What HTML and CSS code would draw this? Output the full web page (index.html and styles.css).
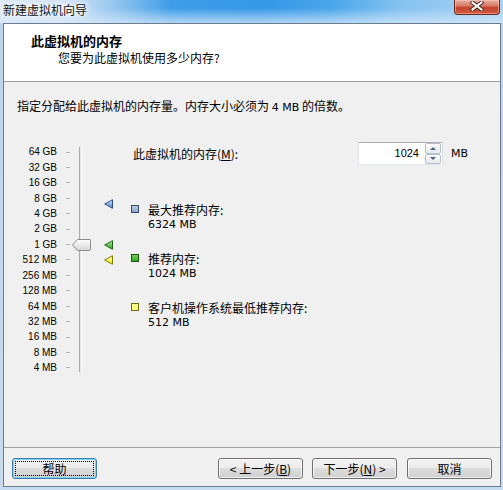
FILE: index.html
```html
<!DOCTYPE html>
<html lang="zh-CN">
<head>
<meta charset="utf-8">
<title>新建虚拟机向导</title>
<link rel="stylesheet" href="styles.css">
</head>
<body>
<div class="window">
  <div class="titlebar">
    <span class="title">新建虚拟机向导</span>
    <div class="close">
      <svg width="14" height="10" viewBox="0 0 14 10">
        <path d="M2.5 1.5 L11.5 8.5 M11.5 1.5 L2.5 8.5" stroke="#3a2420" stroke-width="4" stroke-linecap="square"/>
        <path d="M2.5 1.5 L11.5 8.5 M11.5 1.5 L2.5 8.5" stroke="#ffffff" stroke-width="2.2" stroke-linecap="square"/>
      </svg>
    </div>
  </div>
  <div class="client">
    <div class="header">
      <div class="h-title">此虚拟机的内存</div>
      <div class="h-sub">您要为此虚拟机使用多少内存?</div>
    </div>
    <div class="content">
      <p class="intro">指定分配给此虚拟机的内存量。内存大小必须为 <span class="num">4 MB</span> 的倍数。</p>
      <div class="main">
        <div class="scale">
          <div class="track"></div>
          <span class="lbl">64 GB</span><span class="tick"></span>
          <span class="lbl">32 GB</span><span class="tick"></span>
          <span class="lbl">16 GB</span><span class="tick"></span>
          <span class="lbl">8 GB</span><span class="tick"></span>
          <span class="lbl">4 GB</span><span class="tick"></span>
          <span class="lbl">2 GB</span><span class="tick"></span>
          <span class="lbl">1 GB</span><span class="tick"></span>
          <span class="lbl">512 MB</span><span class="tick"></span>
          <span class="lbl">256 MB</span><span class="tick"></span>
          <span class="lbl">128 MB</span><span class="tick"></span>
          <span class="lbl">64 MB</span><span class="tick"></span>
          <span class="lbl">32 MB</span><span class="tick"></span>
          <span class="lbl">16 MB</span><span class="tick"></span>
          <span class="lbl">8 MB</span><span class="tick"></span>
          <span class="lbl">4 MB</span><span class="tick"></span>
          <svg class="thumb" style="top:97px" width="19" height="12" viewBox="0 0 19 12">
            <defs>
              <linearGradient id="tg" x1="0" y1="0" x2="0" y2="1">
                <stop offset="0" stop-color="#ffffff"/>
                <stop offset="1" stop-color="#d4d4d4"/>
              </linearGradient>
            </defs>
            <path d="M0.5 6 L5.5 0.5 L18 0.5 Q18.5 0.5 18.5 1.5 L18.5 10.5 Q18.5 11.5 17.5 11.5 L5.5 11.5 Z" fill="url(#tg)" stroke="#8b8b8b"/>
          </svg>
          <svg class="marker" style="top:57px" width="9" height="10" viewBox="0 0 9 10">
            <defs>
              <linearGradient id="mb" x1="0" y1="0" x2="0" y2="1">
                <stop offset="0" stop-color="#d6e4f6"/>
                <stop offset="1" stop-color="#4b7cc0"/>
              </linearGradient>
            </defs>
            <path d="M0.7 5 L8.5 0.7 L8.5 9.3 Z" fill="url(#mb)" stroke="#2d4f86" stroke-linejoin="round"/>
          </svg>
          <svg class="marker" style="top:98px" width="9" height="10" viewBox="0 0 9 10">
            <defs>
              <linearGradient id="mg" x1="0" y1="0" x2="0" y2="1">
                <stop offset="0" stop-color="#b9f0a8"/>
                <stop offset="1" stop-color="#27a018"/>
              </linearGradient>
            </defs>
            <path d="M0.7 5 L8.5 0.7 L8.5 9.3 Z" fill="url(#mg)" stroke="#1b6612" stroke-linejoin="round"/>
          </svg>
          <svg class="marker" style="top:113px" width="9" height="10" viewBox="0 0 9 10">
            <defs>
              <linearGradient id="my" x1="0" y1="0" x2="0" y2="1">
                <stop offset="0" stop-color="#ffffc8"/>
                <stop offset="1" stop-color="#f0f000"/>
              </linearGradient>
            </defs>
            <path d="M0.7 5 L8.5 0.7 L8.5 9.3 Z" fill="url(#my)" stroke="#7a7a00" stroke-linejoin="round"/>
          </svg>
        </div>
        <div class="legend">
          <div class="mem-row">
            <span class="mem-label">此虚拟机的内存(<u>M</u>):</span>
            <div class="spin">
              <span class="spin-val">1024</span>
              <div class="spin-btns">
                <span class="sb"><span class="arr up"></span></span>
                <span class="sb"><span class="arr down"></span></span>
              </div>
            </div>
            <span class="num mb">MB</span>
          </div>
          <div class="item first">
            <span class="sw blue"></span>
            <div class="item-text">
              <div>最大推荐内存:</div>
              <div class="num">6324 MB</div>
            </div>
          </div>
          <div class="item">
            <span class="sw green"></span>
            <div class="item-text">
              <div>推荐内存:</div>
              <div class="num">1024 MB</div>
            </div>
          </div>
          <div class="item">
            <span class="sw yellow"></span>
            <div class="item-text">
              <div>客户机操作系统最低推荐内存:</div>
              <div class="num">512 MB</div>
            </div>
          </div>
        </div>
      </div>
    </div>
    <div class="footer">
      <button class="btn help">帮助</button>
      <button class="btn back">&lt; 上一步(<u>B</u>)</button>
      <button class="btn next">下一步(<u>N</u>) &gt;</button>
      <button class="btn cancel">取消</button>
    </div>
  </div>
</div>
</body>
</html>
```
FILE: styles.css
```css
* { box-sizing: border-box; }

body {
  margin: 0;
  background: #c6d8ec;
}

.window {
  width: 503px;
  height: 490px;
  display: flex;
  flex-direction: column;
  background: linear-gradient(to bottom, #bcd3ea, #c9dbee);
  font-family: "Noto Sans CJK SC", sans-serif;
  font-size: 12px;
  color: #000;
}

.titlebar {
  height: 23px;
  flex: none;
  display: flex;
  align-items: flex-start;
  background:
    linear-gradient(to bottom, rgba(255,255,255,0) 0%, rgba(255,255,255,0) 35%, rgba(214,232,249,0.75) 100%),
    linear-gradient(to right, #dbe8f6 0%, #cfe2f5 14%, #8cc2ee 24%, #3f9de8 34%, #3597e6 52%, #4aa6ea 66%, #86c3f0 80%, #a9d2f3 100%);
}

.title {
  padding-left: 3px;
  line-height: 20px;
  font-size: 12px;
  color: #111;
  text-shadow: 0 0 4px #fff, 0 0 6px #fff, 0 0 8px rgba(255,255,255,0.9);
}

.close {
  margin-left: auto;
  margin-right: 3px;
  width: 46px;
  height: 15px;
  border: 1px solid #6a2a20;
  border-top: none;
  border-radius: 0 0 4px 4px;
  background: linear-gradient(to bottom, #eab1a4 0%, #d87a66 40%, #c4432d 55%, #cf5a3f 100%);
  box-shadow: inset 0 0 0 1px rgba(255,200,190,0.5);
  display: flex;
  justify-content: center;
  align-items: flex-start;
  padding-top: 1px;
}

.client {
  flex: 1;
  margin: 0 2px 3px 3px;
  border: 1px solid #6b7c8e;
  background: #f0f0f0;
  display: flex;
  flex-direction: column;
}

.header {
  flex: none;
  height: 58px;
  background: #fff;
  border-bottom: 1px solid #a0a0a0;
  padding: 9px 0 0 27px;
}

.h-title {
  font-size: 13px;
  font-weight: bold;
  line-height: 16px;
}

.h-sub {
  margin-top: 1px;
  padding-left: 27px;
  line-height: 16px;
}

.content {
  flex: 1;
  padding: 16px 0 0 13px;
}

.intro {
  margin: 0;
  line-height: 16px;
  white-space: nowrap;
}

.num {
  font-family: "DejaVu Sans", sans-serif;
  font-size: 11px;
}

.main {
  display: flex;
  margin-top: 26px;
}

.scale {
  position: relative;
  flex: none;
  width: 114px;
  display: grid;
  grid-template-columns: 40px 9px 4px 9px 3px;
  grid-template-rows: repeat(15, 15.43px);
  align-content: start;
  padding-top: 2.3px;
}

.lbl {
  grid-column: 1;
  text-align: right;
  font-family: "Liberation Sans", sans-serif;
  font-size: 10px;
  line-height: 15.43px;
  white-space: nowrap;
}

.tick {
  grid-column: 3;
  align-self: center;
  height: 1px;
  background: #b4b4b4;
}

.track {
  grid-column: 5;
  grid-row: 1 / -1;
  margin: 2.7px 0 3.7px;
  border-left: 1px solid #a9a9a9;
  border-right: 1px solid #ffffff;
  background: #e2e2e2;
}

.thumb {
  position: absolute;
  left: 55px;
}

.marker {
  position: absolute;
  left: 87px;
}

.legend {
  flex: 1;
  display: flex;
  flex-direction: column;
}

.mem-row {
  display: flex;
  align-items: center;
  height: 23px;
  padding-left: 2px;
}

.mem-label {
  width: 225px;
  flex: none;
  line-height: 16px;
}

.spin {
  display: flex;
  width: 85px;
  height: 23px;
  border: 1px solid;
  border-color: #abadb3 #dbdfe6 #e3e9ef #e2e3ea;
  background: #fff;
}

.spin-val {
  flex: 1;
  text-align: right;
  padding-right: 6px;
  font-family: "Liberation Sans", sans-serif;
  font-size: 11px;
  line-height: 21px;
}

.spin-btns {
  width: 17px;
  display: flex;
  flex-direction: column;
  padding: 0 1px 0 0;
}

.sb {
  flex: 1;
  border: 1px solid #b7c1cc;
  border-radius: 2px;
  background: linear-gradient(to bottom, #fbfbfb, #e6eaee);
  display: flex;
  align-items: center;
  justify-content: center;
}

.arr {
  width: 0;
  height: 0;
  border-left: 3px solid transparent;
  border-right: 3px solid transparent;
}

.arr.up { border-bottom: 3px solid #4d6185; }
.arr.down { border-top: 3px solid #4d6185; }

.mb {
  margin-left: 8px;
  line-height: 16px;
}

.item {
  display: flex;
  margin-top: 19px;
}

.item.first { margin-top: 36.5px; }

.sw {
  flex: none;
  width: 8px;
  height: 8px;
  margin-top: 3.5px;
  border: 1px solid;
}

.sw.blue { border-color: #39496a; background: linear-gradient(#b7cbe6, #8aa7d0); }
.sw.green { border-color: #1f5514; background: linear-gradient(#6ed15a, #35a624); }
.sw.yellow { border-color: #6b6b10; background: #ffff80; }

.item-text {
  margin-left: 9px;
  line-height: 15px;
  white-space: nowrap;
}

.footer {
  flex: none;
  height: 39px;
  border-top: 1px solid #a0a0a0;
  display: flex;
  align-items: flex-start;
  padding: 10px 8px 0 8px;
}

.btn {
  width: 85px;
  height: 21px;
  padding: 0;
  border: 1px solid #707070;
  border-radius: 3px;
  background: linear-gradient(to bottom, #f2f2f2 0%, #ebebeb 50%, #dddddd 50%, #cfcfcf 100%);
  box-shadow: inset 0 0 0 1px rgba(255,255,255,0.7);
  font-family: "Noto Sans CJK SC", sans-serif;
  font-size: 12px;
  line-height: 19px;
  color: #000;
}

.btn.help {
  border-color: #3c7fb1;
  box-shadow: inset 0 0 0 1px #7fd0f5;
  outline: 1px dotted #000;
  outline-offset: -4px;
}

.btn.back { margin-left: auto; }
.btn.next { margin-left: 9px; }
.btn.cancel { margin-left: 10px; }
```
